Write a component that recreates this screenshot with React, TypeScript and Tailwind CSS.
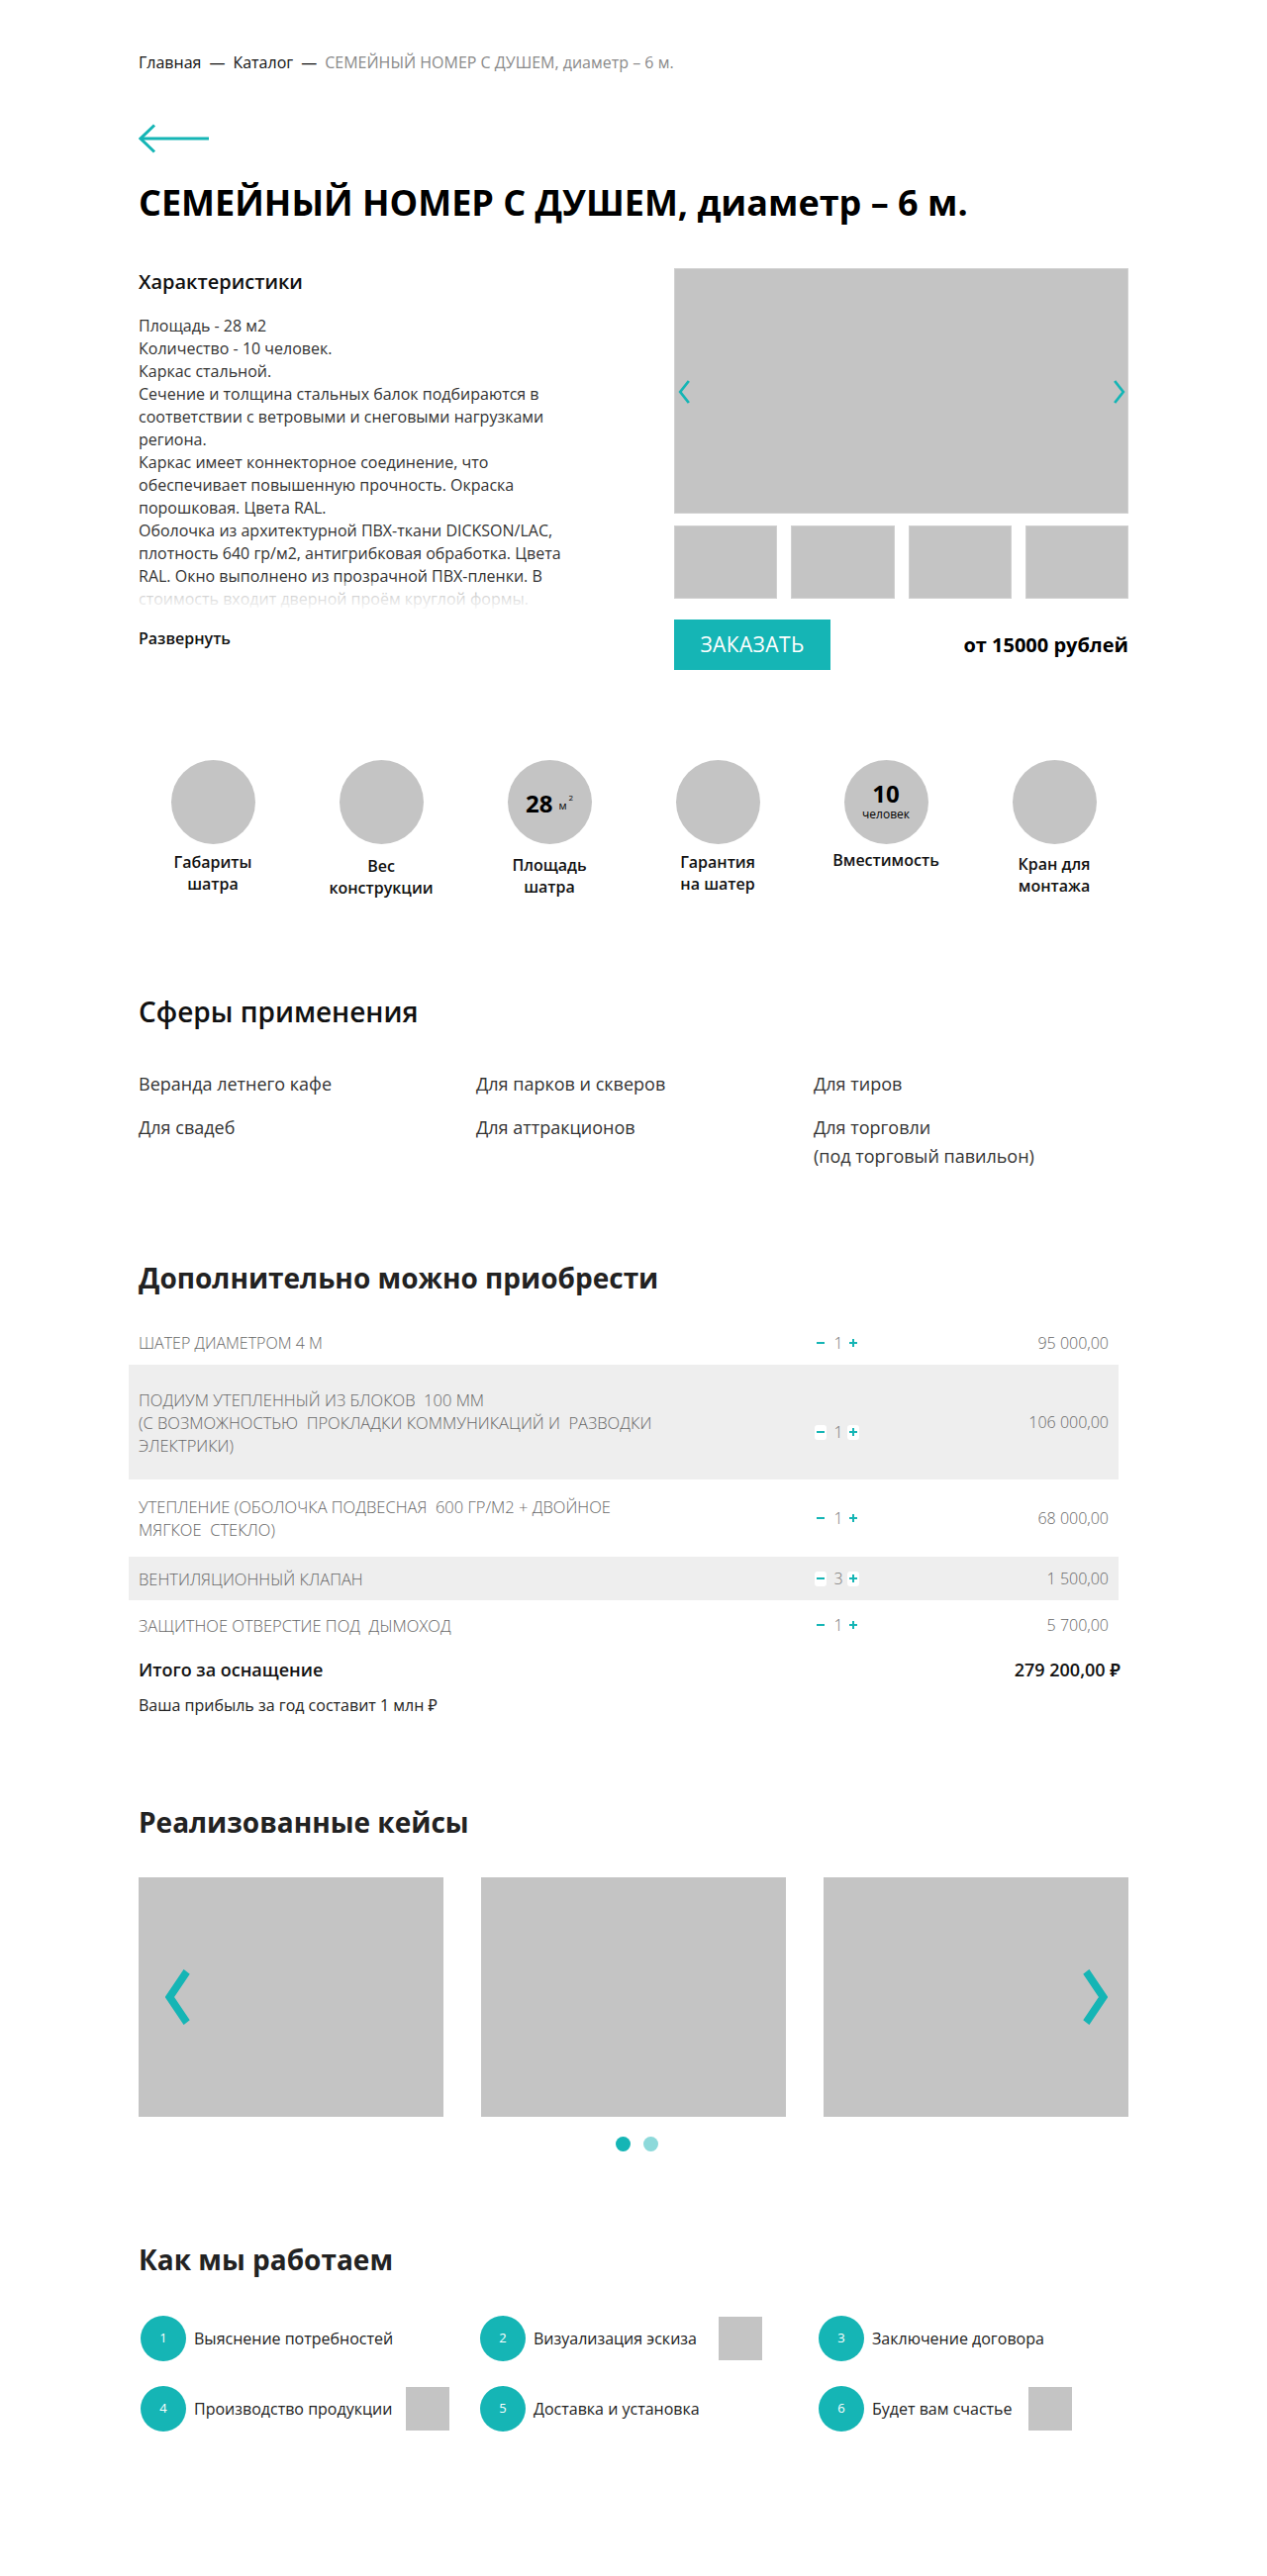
import React from "react";

const TEAL = "#15b5b5";

function Chevron({ dir, className, stroke = 2.5 }: { dir: "l" | "r"; className?: string; stroke?: number }) {
  return (
    <svg viewBox="0 0 12 24" className={className} fill="none" preserveAspectRatio="none">
      {dir === "l" ? (
        <polyline points="10,1 2,12 10,23" stroke={TEAL} strokeWidth={stroke} strokeLinejoin="miter" />
      ) : (
        <polyline points="2,1 10,12 2,23" stroke={TEAL} strokeWidth={stroke} strokeLinejoin="miter" />
      )}
    </svg>
  );
}

function Qty({ n }: { n: number }) {
  return (
    <div className="flex items-center w-[50px]">
      <span className="w-[12px] h-[15px] bg-white rounded-[3px] flex items-center justify-center">
        <span className="block w-[8px] h-[2px] bg-[#15b5b5]" />
      </span>
      <span className="ml-[5px] w-[14px] text-center text-[16px] font-light text-[#777]">{n}</span>
      <span className="ml-[2px] w-[12px] h-[15px] bg-white rounded-[3px] relative flex items-center justify-center">
        <span className="block w-[8px] h-[2px] bg-[#15b5b5]" />
        <span className="absolute block w-[2px] h-[8px] bg-[#15b5b5]" />
      </span>
    </div>
  );
}

type Row = { text: string; qty: number; price: string; h: string; gray?: boolean; qtyShift?: string; size?: string };

const rows: Row[] = [
  { text: "ШАТЕР ДИАМЕТРОМ 4 М", qty: 1, price: "95 000,00", h: "h-[44px]", size: "text-[16px]" },
  {
    text: "ПОДИУМ УТЕПЛЕННЫЙ ИЗ БЛОКОВ  100 ММ\n(С ВОЗМОЖНОСТЬЮ  ПРОКЛАДКИ КОММУНИКАЦИЙ И  РАЗВОДКИ\nЭЛЕКТРИКИ)",
    qty: 1,
    price: "106 000,00",
    h: "h-[116px]",
    gray: true,
    qtyShift: "mt-[20px]",
  },
  { text: "УТЕПЛЕНИЕ (ОБОЛОЧКА ПОДВЕСНАЯ  600 ГР/М2 + ДВОЙНОЕ\nМЯГКОЕ  СТЕКЛО)", qty: 1, price: "68 000,00", h: "h-[78px]" },
  { text: "ВЕНТИЛЯЦИОННЫЙ КЛАПАН", qty: 3, price: "1 500,00", h: "h-[44px]", gray: true },
  { text: "ЗАЩИТНОЕ ОТВЕРСТИЕ ПОД  ДЫМОХОД", qty: 1, price: "5 700,00", h: "h-[50px]" },
];

function Feature({ label, children, lmt }: { label: React.ReactNode; children?: React.ReactNode; lmt?: string }) {
  return (
    <div className="w-[150px] flex flex-col items-center">
      <div className="w-[85px] h-[85px] rounded-full bg-[#c4c4c4] flex flex-col items-center justify-center">
        {children}
      </div>
      <div className={`${lmt ?? "mt-[9px]"} text-[16px] leading-[22px] font-semibold text-[#111] text-center`}>{label}</div>
    </div>
  );
}

function Step({ n, text, sq, sqMl }: { n: number; text: string; sq?: boolean; sqMl?: string }) {
  return (
    <div className="flex items-center h-[46px]">
      <div className="w-[46px] h-[46px] rounded-full bg-[#15b5b5] text-white text-[13px] flex items-center justify-center shrink-0">
        {n}
      </div>
      <div className="ml-[8px] text-[16px] text-[#222]">{text}</div>
      {sq && <div className={`w-[44px] h-[44px] bg-[#c4c4c4] ${sqMl ?? "ml-[16px]"}`} />}
    </div>
  );
}

export default function App() {
  return (
    <div className="w-full bg-white" style={{ fontFamily: "'Open Sans', 'Noto Sans', sans-serif" }}>
      <div className="w-[1000px] mx-auto pt-[53px] pb-[147px]">
        {/* breadcrumb */}
        <div className="text-[16px] leading-[20px] text-[#111] flex">
          <span>Главная</span>
          <span className="mx-[8px]">—</span>
          <span>Каталог</span>
          <span className="mx-[8px]">—</span>
          <span className="text-[#8a8a8a]">СЕМЕЙНЫЙ НОМЕР С ДУШЕМ, диаметр – 6 м.</span>
        </div>

        {/* back arrow */}
        <svg className="mt-[52px] block" width="72" height="30" viewBox="0 0 72 30" fill="none">
          <line x1="2" y1="15" x2="71" y2="15" stroke={TEAL} strokeWidth="3" />
          <polyline points="16,1.5 2,15 16,28.5" stroke={TEAL} strokeWidth="3" fill="none" />
        </svg>

        <h1 className="mt-[26px] text-[36px] leading-[48px] font-bold text-black">
          СЕМЕЙНЫЙ НОМЕР С ДУШЕМ, диаметр – 6 м.
        </h1>

        {/* main section */}
        <div className="mt-[42px] flex justify-between">
          <div className="w-[440px]">
            <h2 className="text-[20px] leading-[28px] font-semibold text-[#111]">Характеристики</h2>
            <div className="relative mt-[19px] h-[300px] overflow-hidden text-[16px] leading-[23px] text-[#333]">
              <p>Площадь - 28 м2</p>
              <p>Количество - 10 человек.</p>
              <p>Каркас стальной.</p>
              <p>Сечение и толщина стальных балок подбираются в соответствии с ветровыми и снеговыми нагрузками региона.</p>
              <p>
                Каркас имеет коннекторное соединение, что обеспечивает повышенную прочность. Окраска порошковая. Цвета RAL.
              </p>
              <p>
                Оболочка из архитектурной ПВХ-ткани DICKSON/LAC, плотность 640 гр/м2, антигрибковая обработка. Цвета RAL. Окно
                выполнено из прозрачной ПВХ-пленки. В стоимость входит дверной проём круглой формы.
              </p>
              <div className="absolute left-0 right-0 bottom-0 h-[30px] bg-gradient-to-b from-white/50 via-white/80 to-white" />
            </div>
            <div className="mt-[16px] text-[16px] leading-[22px] font-semibold text-[#111]">Развернуть</div>
          </div>

          <div className="w-[459px]">
            <div className="relative h-[248px] bg-[#c4c4c4] border border-[#d0d0d0]">
              <Chevron dir="l" className="absolute left-[3px] top-[112px] w-[13px] h-[24px]" />
              <Chevron dir="r" className="absolute right-[2px] top-[112px] w-[13px] h-[24px]" />
            </div>
            <div className="mt-[12px] grid grid-cols-4 gap-[14px]">
              <div className="h-[74px] bg-[#c4c4c4] border border-[#d0d0d0]" />
              <div className="h-[74px] bg-[#c4c4c4] border border-[#d0d0d0]" />
              <div className="h-[74px] bg-[#c4c4c4] border border-[#d0d0d0]" />
              <div className="h-[74px] bg-[#c4c4c4] border border-[#d0d0d0]" />
            </div>
            <div className="mt-[21px] flex items-center justify-between">
              <button className="w-[158px] h-[51px] bg-[#15b5b5] text-white text-[21px] tracking-[0.4px]">ЗАКАЗАТЬ</button>
              <div className="text-[20px] font-bold text-black">от 15000 рублей</div>
            </div>
          </div>
        </div>

        {/* features */}
        <div className="mt-[91px] flex justify-between">
          <Feature label={<>Габариты<br />шатра</>} lmt="mt-[7px]" />
          <Feature label={<>Вес<br />конструкции</>} lmt="mt-[11px]" />
          <Feature label={<>Площадь<br />шатра</>} lmt="mt-[10px]">
            <div className="flex items-start mt-[2px]">
              <span className="text-[24px] leading-[30px] font-bold text-black">28</span>
              <span className="ml-[6px] mt-[10px] text-[11px] leading-[14px] text-black">м</span>
              <span className="ml-[2px] mt-[4px] text-[8px] leading-[10px] text-black">2</span>
            </div>
          </Feature>
          <Feature label={<>Гарантия<br />на шатер</>} lmt="mt-[7px]" />
          <Feature label={<>Вместимость</>} lmt="mt-[5px]">
            <span className="text-[24px] leading-[28px] font-bold text-black mt-[-4px]">10</span>
            <span className="text-[12px] leading-[14px] text-black">человек</span>
          </Feature>
          <Feature label={<>Кран для<br />монтажа</>} lmt="mt-[9px]" />
        </div>

        {/* spheres */}
        <h2 className="mt-[95px] text-[28px] leading-[38px] font-semibold text-[#111]">Сферы применения</h2>
        <div className="mt-[40px] grid grid-cols-[341px_341px_1fr] gap-y-[15px] text-[18px] leading-[29px] text-[#333]">
          <div>Веранда летнего кафе</div>
          <div>Для парков и скверов</div>
          <div>Для тиров</div>
          <div>Для свадеб</div>
          <div>Для аттракционов</div>
          <div>
            Для торговли
            <br />
            (под торговый павильон)
          </div>
        </div>

        {/* extras */}
        <h2 className="mt-[89px] text-[28px] leading-[38px] font-bold text-[#222]">Дополнительно можно приобрести</h2>
        <div className="mt-[25px] ml-[-10px] w-[1000px]">
          {rows.map((r, i) => (
            <div key={i} className={`${r.h} flex items-center px-[10px] ${r.gray ? "bg-[#eeeeee]" : ""}`}>
              <div className={`w-[683px] whitespace-pre ${r.size ?? "text-[16.5px]"} leading-[23px] font-light text-[#666]`}>
                {r.text}
              </div>
              <div className={r.qtyShift ?? ""}>
                <Qty n={r.qty} />
              </div>
              <div className="flex-1 text-right text-[16px] font-light text-[#666]">{r.price}</div>
            </div>
          ))}
        </div>
        <div className="mt-[8px] flex justify-between text-[18px] leading-[24px] font-semibold text-[#111]">
          <span>Итого за оснащение</span>
          <span className="mr-[8px]">279 200,00 ₽</span>
        </div>
        <div className="mt-[13px] text-[16px] leading-[22px] text-[#222]">Ваша прибыль за год составит 1 млн ₽</div>

        {/* cases */}
        <h2 className="mt-[88px] text-[28px] leading-[38px] font-bold text-[#222]">Реализованные кейсы</h2>
        <div className="mt-[37px] relative flex justify-between">
          <div className="w-[308px] h-[242px] bg-[#c4c4c4]" />
          <div className="w-[308px] h-[242px] bg-[#c4c4c4]" />
          <div className="w-[308px] h-[242px] bg-[#c4c4c4]" />
          <Chevron dir="l" stroke={3.5} className="absolute left-[27px] top-[93px] w-[26px] h-[56px]" />
          <Chevron dir="r" stroke={3.5} className="absolute right-[21px] top-[93px] w-[26px] h-[56px]" />
        </div>
        <div className="mt-[20px] flex justify-center gap-[13px] pl-[6px]">
          <span className="w-[15px] h-[15px] rounded-full bg-[#15b5b5]" />
          <span className="w-[15px] h-[15px] rounded-full bg-[#8dd9da]" />
        </div>

        {/* how we work */}
        <h2 className="mt-[90px] text-[28px] leading-[38px] font-bold text-[#222]">Как мы работаем</h2>
        <div className="mt-[38px] pl-[2px] grid grid-cols-[343px_342px_1fr] gap-y-[25px]">
          <Step n={1} text="Выяснение потребностей" />
          <Step n={2} text="Визуализация эскиза" sq sqMl="ml-[22px]" />
          <Step n={3} text="Заключение договора" />
          <Step n={4} text="Производство продукции" sq sqMl="ml-[14px]" />
          <Step n={5} text="Доставка и установка" />
          <Step n={6} text="Будет вам счастье" sq />
        </div>
      </div>
    </div>
  );
}
